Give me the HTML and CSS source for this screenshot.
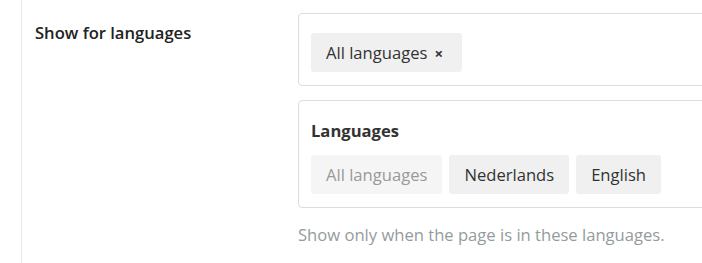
FILE: index.html
```html
<!DOCTYPE html>
<html lang="en">
<head>
    <meta charset="UTF-8">
    <meta name="viewport" content="width=device-width, initial-scale=1.0">
    <title>Show for languages</title>
    <link rel="stylesheet" href="styles.css">
</head>
<body>
    <div class="panel">
        <div class="field">
            <label class="field-label">Show for languages</label>
            <div class="field-control">
                <!-- Selected values -->
                <div class="select-box">
                    <span class="chip">All languages <span class="chip-remove">&times;</span></span>
                </div>

                <!-- Options -->
                <div class="options-box">
                    <div class="options-title">Languages</div>
                    <div class="options-list">
                        <span class="chip chip-disabled">All languages</span>
                        <span class="chip">Nederlands</span>
                        <span class="chip">English</span>
                    </div>
                </div>

                <p class="help-text">Show only when the page is in these languages.</p>
            </div>
        </div>
    </div>
</body>
</html>
```

FILE: styles.css
```css
html, body {
    margin: 0;
    padding: 0;
    background: #fff;
    overflow: hidden;
}
body {
    font-family: "Open Sans", "Noto Sans", sans-serif;
    font-size: 16.6px;
    line-height: 22px;
    color: #333;
}
.panel {
    margin-left: 21px;
    border-left: 1px solid #e6e6e6;
    height: 263px;
    padding-left: 13px;
    box-sizing: border-box;
}
.field {
    display: flex;
    padding-top: 13px;
}
.field-label {
    width: 263px;
    flex-shrink: 0;
    font-weight: 600;
    color: #222;
    padding-top: 9px;
}
.field-control {
    width: 420px;
    flex-shrink: 0;
}
.select-box,
.options-box {
    border: 1px solid #ddd;
    border-radius: 4px;
    padding: 19px 12px 13px;
}
.options-box {
    margin-top: 14px;
}
.options-title {
    font-weight: 700;
    color: #333;
    margin-bottom: 13px;
}
.options-list {
    display: flex;
    gap: 7px;
}
.chip {
    display: inline-flex;
    align-items: center;
    height: 39px;
    box-sizing: border-box;
    padding: 0 15px;
    background: #f0f0f0;
    border-radius: 3px;
    color: #333;
    white-space: nowrap;
}
.chip-remove {
    margin-left: 7px;
    margin-right: 4px;
    font-weight: 700;
    font-size: 15px;
}
.chip-disabled {
    background: #f5f5f5;
    color: #999;
}
.help-text {
    margin: 16px 0 0;
    color: #939c9c;
}
```
